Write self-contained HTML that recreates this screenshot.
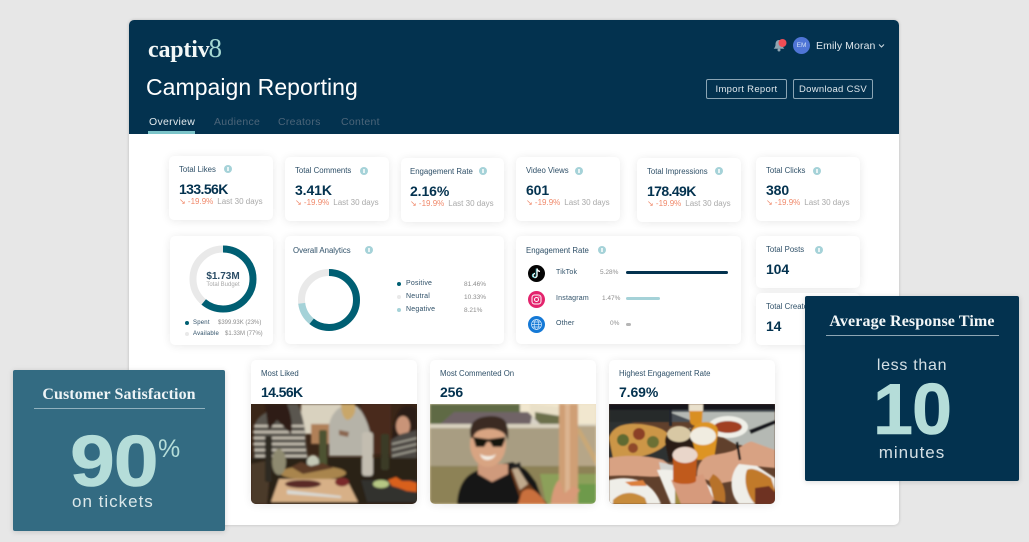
<!DOCTYPE html>
<html><head><meta charset="utf-8"><style>
*{box-sizing:border-box;margin:0;padding:0}
html,body{width:1029px;height:542px;overflow:hidden;background:#e7e7e7}
body{position:relative;font-family:"Liberation Sans",sans-serif;color:#03324f;filter:blur(.3px)}
.a{position:absolute;white-space:nowrap}
#panel{left:129px;top:20px;width:770px;height:505px;background:#fff;border-radius:5px;box-shadow:0 0 3px rgba(0,0,0,.18)}
#head{left:129px;top:20px;width:770px;height:114px;background:#03324f;border-radius:5px 5px 0 0}
.c{position:absolute;background:#fff;border-radius:5px;box-shadow:0 1px 9px rgba(0,0,0,.09)}
.t{position:absolute;font-size:7.8px;letter-spacing:0;color:#2f5068;white-space:nowrap}
.i{position:absolute;width:8px;height:8px;border-radius:50%;background:#a5d2d8}
.i:after{content:"";position:absolute;left:3.4px;top:2px;width:1.2px;height:4px;background:#e8f4f5}
.v{position:absolute;font-size:14px;font-weight:bold;color:#03324f;white-space:nowrap;letter-spacing:-.1px}
.d{position:absolute;font-size:8px;white-space:nowrap;color:#f08a6c}
.d span{color:#a9a9a9;margin-left:4px;letter-spacing:0}
.s{position:absolute;font-size:6.5px;color:#8d8d8d;white-space:nowrap}
.l{position:absolute;font-size:7px;color:#2f5068;white-space:nowrap;letter-spacing:.2px}
.p{position:absolute;width:5px;height:5px;border-radius:50%}
.tab{position:absolute;top:116px;font-size:10.5px;letter-spacing:.3px;color:#4c6579;white-space:nowrap}
.btn{position:absolute;top:79px;height:20px;border:1px solid #8ba5b4;border-radius:2px;color:#dfe7ec;font-size:9.5px;letter-spacing:.3px;text-align:center;line-height:19px}
.ser{font-family:"Liberation Serif",serif;font-weight:bold}
.big{-webkit-text-stroke:.6px #b5ddd9}
svg{position:absolute;display:block}
</style></head><body>
<div class="a" id="panel"></div>
<div class="a" id="head"></div>

<div class="a ser" style="left:148px;top:33px;font-size:24px;color:#f2f7f7;letter-spacing:-.2px">captiv<span style="color:#a5d8d2;font-weight:normal;font-size:27px;margin-left:-1px">8</span></div>
<div class="a" style="left:146px;top:74px;font-size:23px;color:#fff;letter-spacing:.05px">Campaign Reporting</div>
<div class="tab" style="left:149px;color:#e2e9ed">Overview</div>
<div class="tab" style="left:214px">Audience</div>
<div class="tab" style="left:278px">Creators</div>
<div class="tab" style="left:341px">Content</div>
<div class="a" style="left:148px;top:131px;width:47px;height:3px;background:#7cc4c9"></div>

<svg style="left:772px;top:38px" width="18" height="16" viewBox="0 0 18 16"><path d="M7 2c-2.400 0-3.500 2-3.500 4.500 0 2-.8 3-1.800 4.200h10.600c-1-1.200-1.800-2.200-1.800-4.200C10.500 4 9.400 2 7 2z" fill="#8fa5b2"/><circle cx="7" cy="12" r="1.500" fill="#8fa5b2"/><circle cx="10.500" cy="5" r="4" fill="#ee4d55"/></svg>
<div class="a" style="left:793px;top:37px;width:17px;height:17px;border-radius:50%;background:#4f75d6;color:#cfe0f5;font-size:6.500px;text-align:center;line-height:17px">EM</div>
<div class="a" style="left:816px;top:40px;font-size:10.500px;color:#dfe7ec;letter-spacing:.1px">Emily Moran</div>
<svg style="left:878px;top:43px" width="7" height="6" viewBox="0 0 7 6"><path d="M1 1.500l2.500 2.500L6 1.500" fill="none" stroke="#cfd9e0" stroke-width="1"/></svg>
<div class="btn" style="left:706px;width:81px">Import Report</div>
<div class="btn" style="left:793px;width:80px">Download CSV</div>

<!-- row 1 -->
<div class="c" style="left:169px;top:156px;width:104px;height:64px"></div>
<div class="t" style="left:179px;top:165px">Total Likes</div><div class="i" style="left:224px;top:165px"></div>
<div class="v" style="left:179px;top:181px;letter-spacing:-.6px">133.56K</div>
<div class="d" style="left:179px;top:197px">↘ -19.9%<span>Last 30 days</span></div>

<div class="c" style="left:285px;top:157px;width:104px;height:64px"></div>
<div class="t" style="left:295px;top:166px">Total Comments</div><div class="i" style="left:360px;top:167px"></div>
<div class="v" style="left:295px;top:182px">3.41K</div>
<div class="d" style="left:295px;top:198px">↘ -19.9%<span>Last 30 days</span></div>

<div class="c" style="left:401px;top:158px;width:103px;height:64px"></div>
<div class="t" style="left:410px;top:167px">Engagement Rate</div><div class="i" style="left:479px;top:167px"></div>
<div class="v" style="left:410px;top:183px">2.16%</div>
<div class="d" style="left:410px;top:199px">↘ -19.9%<span>Last 30 days</span></div>

<div class="c" style="left:516px;top:157px;width:104px;height:64px"></div>
<div class="t" style="left:526px;top:166px">Video Views</div><div class="i" style="left:575px;top:167px"></div>
<div class="v" style="left:526px;top:182px">601</div>
<div class="d" style="left:526px;top:198px">↘ -19.9%<span>Last 30 days</span></div>

<div class="c" style="left:637px;top:158px;width:104px;height:64px"></div>
<div class="t" style="left:647px;top:167px">Total Impressions</div><div class="i" style="left:715px;top:167px"></div>
<div class="v" style="left:647px;top:183px;letter-spacing:-.6px">178.49K</div>
<div class="d" style="left:647px;top:199px">↘ -19.9%<span>Last 30 days</span></div>

<div class="c" style="left:756px;top:157px;width:104px;height:64px"></div>
<div class="t" style="left:766px;top:166px">Total Clicks</div><div class="i" style="left:813px;top:167px"></div>
<div class="v" style="left:766px;top:182px">380</div>
<div class="d" style="left:766px;top:198px">↘ -19.9%<span>Last 30 days</span></div>

<!-- row 2 -->
<div class="c" style="left:170px;top:236px;width:103px;height:109px"></div>
<svg style="left:189px;top:245px" width="68" height="68" viewBox="0 0 68 68"><circle cx="34" cy="34" r="30" fill="none" stroke="#e9e9e9" stroke-width="7"/><circle cx="34" cy="34" r="30" fill="none" stroke="#005f73" stroke-width="7" stroke-dasharray="115 188.500" transform="rotate(-90 34 34)"/></svg>
<div class="a" style="left:189px;width:68px;top:271px;text-align:center;font-size:10px;font-weight:bold;color:#2b4d66">$1.73M</div>
<div class="a" style="left:189px;width:68px;top:282px;text-align:center;font-size:6px;color:#a9a9a9">Total Budget</div>
<div class="p" style="left:185px;top:321px;width:4px;height:4px;background:#005f73"></div>
<div class="l" style="left:193px;top:320px;font-size:6px">Spent</div>
<div class="s" style="left:218px;top:320px;font-size:6px">$399.93K (23%)</div>
<div class="p" style="left:185px;top:332px;width:4px;height:4px;background:#e9e9e9"></div>
<div class="l" style="left:193px;top:331px;font-size:6px">Available</div>
<div class="s" style="left:225px;top:331px;font-size:6px">$1.33M (77%)</div>

<div class="c" style="left:285px;top:236px;width:219px;height:108px"></div>
<div class="t" style="left:293px;top:246px">Overall Analytics</div><div class="i" style="left:365px;top:246px"></div>
<svg style="left:298px;top:269px" width="62" height="62" viewBox="0 0 62 62"><circle cx="31" cy="31" r="27.500" fill="none" stroke="#e9e9e9" stroke-width="7"/><circle cx="31" cy="31" r="27.500" fill="none" stroke="#a5d2d8" stroke-width="7" stroke-dasharray="0 104 22 200" transform="rotate(-90 31 31)"/><circle cx="31" cy="31" r="27.500" fill="none" stroke="#005f73" stroke-width="7" stroke-dasharray="105 172.800" transform="rotate(-90 31 31)"/></svg>
<div class="p" style="left:397px;top:282px;width:4px;height:4px;background:#005f73"></div>
<div class="l" style="left:406px;top:280px">Positive</div><div class="s" style="left:464px;top:281px">81.46%</div>
<div class="p" style="left:397px;top:295px;width:4px;height:4px;background:#e9e9e9"></div>
<div class="l" style="left:406px;top:293px">Neutral</div><div class="s" style="left:464px;top:294px">10.33%</div>
<div class="p" style="left:397px;top:308px;width:4px;height:4px;background:#a5d2d8"></div>
<div class="l" style="left:406px;top:306px">Negative</div><div class="s" style="left:464px;top:307px">8.21%</div>

<div class="c" style="left:516px;top:236px;width:225px;height:108px"></div>
<div class="t" style="left:526px;top:246px">Engagement Rate</div><div class="i" style="left:598px;top:246px"></div>
<svg style="left:528px;top:265px" width="17" height="17" viewBox="0 0 17 17"><circle cx="8.500" cy="8.500" r="8.500" fill="#050505"/><path d="M9 3.500v7a2 2 0 1 1-2-2M9 3.500c.3 1.700 1.400 2.700 3 2.900" fill="none" stroke="#fff" stroke-width="1.400"/><path d="M8 3.500v7a2 2 0 1 1-2-2" fill="none" stroke="#29d3d8" stroke-width=".5"/></svg>
<div class="l" style="left:556px;top:269px">TikTok</div><div class="s" style="left:600px;top:269px">5.28%</div>
<div class="a" style="left:626px;top:271px;width:102px;height:3px;border-radius:2px;background:#03324f"></div>
<svg style="left:528px;top:291px" width="17" height="17" viewBox="0 0 17 17"><circle cx="8.500" cy="8.500" r="8.500" fill="#e3246d"/><rect x="4" y="4" width="9" height="9" rx="2.500" fill="none" stroke="#fff" stroke-width="1"/><circle cx="8.500" cy="8.500" r="2" fill="none" stroke="#fff" stroke-width="1"/><circle cx="11" cy="6" r=".6" fill="#fff"/></svg>
<div class="l" style="left:556px;top:295px">Instagram</div><div class="s" style="left:602px;top:295px">1.47%</div>
<div class="a" style="left:626px;top:297px;width:34px;height:3px;border-radius:2px;background:#a5d2d8"></div>
<svg style="left:528px;top:316px" width="17" height="17" viewBox="0 0 17 17"><circle cx="8.500" cy="8.500" r="8.500" fill="#1579d6"/><g fill="none" stroke="#cfe6fb" stroke-width=".7"><circle cx="8.500" cy="8.500" r="5"/><ellipse cx="8.500" cy="8.500" rx="2.300" ry="5"/><path d="M3.500 8.500h10M4.200 6h8.600M4.200 11h8.600"/></g></svg>
<div class="l" style="left:556px;top:320px">Other</div><div class="s" style="left:610px;top:320px">0%</div>
<div class="a" style="left:626px;top:323px;width:5px;height:3px;border-radius:2px;background:#b5b5b5"></div>

<div class="c" style="left:756px;top:236px;width:104px;height:52px"></div>
<div class="t" style="left:766px;top:245px">Total Posts</div><div class="i" style="left:815px;top:246px"></div>
<div class="v" style="left:766px;top:261px">104</div>
<div class="c" style="left:756px;top:293px;width:104px;height:52px"></div>
<div class="t" style="left:766px;top:302px">Total Creators</div>
<div class="v" style="left:766px;top:318px">14</div>

<!-- row 3 -->
<div class="c" style="left:251px;top:360px;width:166px;height:144px"></div>
<div class="t" style="left:261px;top:369px">Most Liked</div>
<div class="v" style="left:261px;top:384px;letter-spacing:-.6px">14.56K</div>
<svg style="left:251px;top:404px;border-radius:0 0 5px 5px" width="166" height="100" viewBox="0 0 166 100">
<defs><filter id="b1"><feGaussianBlur stdDeviation="1"/></filter></defs>
<rect width="166" height="100" fill="#3a2618"/>
<g filter="url(#b1)">
<rect x="50" y="0" width="42" height="30" fill="#d9d2bf"/>
<rect x="110" y="0" width="30" height="50" fill="#4a2c1c"/>
<rect x="60" y="20" width="22" height="20" fill="#b08058"/>
<path d="M3 55V22C8 8 18 10 25 0h22c5 12 8 28 8 38l2 16z" fill="#5a5650"/>
<path d="M3 22h50M2 28h52M2 34h52M2 40h52M3 46h52M4 52h52" stroke="#cfc8ba" stroke-width="2"/>
<path d="M14 0c2 12 2 20 4 26l8-10 14 14c2-10 0-20-4-30z" fill="#2f1d14"/>
<path d="M78 52V22c1-10 8-18 14-20h14c6 6 12 18 14 32l-2 18z" fill="#b6b3a8"/>
<path d="M90 0c0 8 2 14 6 16 4 0 10-6 8-16z" fill="#c9a76a"/>
<path d="M88 26l10 2-1 5-9-2z" fill="#8a6650"/>
<path d="M142 48c-2-14 0-34 8-44 6-4 14-2 16 2v42z" fill="#2c1a14"/>
<ellipse cx="152" cy="22" rx="7" ry="10" fill="#c99478"/>
<path d="M140 56V36l10-6 16-4v30z" fill="#4d4a44"/>
<path d="M141 40l25-6M141 46l25-6M141 52l25-6" stroke="#a8a598" stroke-width="1.500"/>
<rect x="0" y="54" width="166" height="46" fill="#2a2018"/>
<path d="M0 100V60l20-4-4 44z" fill="#4c3a2a"/>
<ellipse cx="62" cy="69" rx="33" ry="7" fill="#a9854d"/>
<rect x="14" y="32" width="7" height="46" rx="2" fill="#2d2a22"/>
<rect x="68" y="26" width="8" height="36" rx="2" fill="#4d5230"/>
<rect x="111" y="28" width="11" height="44" rx="3" fill="#c3bdb0"/>
<rect x="130" y="30" width="8" height="36" rx="2" fill="#3a3a28"/>
<ellipse cx="28" cy="58" rx="7" ry="13" fill="#8e8a70"/>
<ellipse cx="62" cy="58" rx="6" ry="7" fill="#c4c8b6"/>
<path d="M40 63l10-5 10 4 12-3 10 5-30 6z" fill="#5b3a26"/>
<path d="M28 75l60 0 8 1 11 22H20z" fill="#d7b087"/>
<ellipse cx="52" cy="80" rx="18" ry="4" fill="#5a2a28"/>
<ellipse cx="91" cy="78" rx="7" ry="4.500" fill="#7a2a2a"/>
<path d="M36 86l54 6v2l-54-4z" fill="#d9d9d4"/>
<path d="M110 76h56v22h-50z" fill="#33312d"/>
<ellipse cx="130" cy="80" rx="8" ry="4" fill="#b6c884"/>
<path d="M137 76l8-3 6 4 8 0 7 2v9l-10-1-8-3-7-2z" fill="#d9601f"/>
</g></svg>

<div class="c" style="left:430px;top:360px;width:166px;height:144px"></div>
<div class="t" style="left:440px;top:369px">Most Commented On</div>
<div class="v" style="left:440px;top:384px">256</div>
<svg style="left:430px;top:404px;border-radius:0 0 5px 5px" width="166" height="100" viewBox="0 0 166 100">
<defs><filter id="b2"><feGaussianBlur stdDeviation="1"/></filter></defs>
<rect width="166" height="100" fill="#ecdcc0"/>
<g filter="url(#b2)">
<rect width="166" height="22" fill="#f1e7cf"/>
<path d="M0 0h90v10l-40 10H0z" fill="#5f6a44"/>
<path d="M100 0l40 4v18h-40z" fill="#e9e0c8"/>
<path d="M105 8l25 4v12h-25z" fill="#6c6f4c"/>
<path d="M8 22l16-14h74l14 14z" fill="#6f6466"/>
<path d="M102 12l10 10h-12z" fill="#d8d2c6"/>
<rect x="0" y="20" width="166" height="4" fill="#d9d2bf"/>
<rect x="0" y="24" width="166" height="39" fill="#a89d82"/>
<rect x="148" y="22" width="18" height="40" fill="#b6a688"/>
<path d="M150 24l16 28v10l-20-36z" fill="#c9a877"/>
<rect x="0" y="62" width="166" height="38" fill="#8d8257"/>
<path d="M110 70h56v30h-50z" fill="#8ca05a"/>
<path d="M140 80h26v20h-26z" fill="#6e9a4c"/>
<rect x="129" y="0" width="19" height="100" fill="#cf9f75"/>
<rect x="135" y="0" width="5" height="100" fill="#dcb490"/>
<path d="M121 100c0-6 3-20 8-24 3 6 3 8 5 14l9-8 7 4-10 14z" fill="#d89a78"/>
<path d="M27 100c1-18 8-30 22-34l12-4 22-4 6 4c8 2 12 10 17 16l8 22z" fill="#141414"/>
<path d="M80 62l10-4 2 8-8 4z" fill="#222"/>
<path d="M48 60h30v10l-16 8-14-8z" fill="#cf9a7b"/>
<ellipse cx="58" cy="40" rx="18" ry="23" fill="#d8a482"/>
<path d="M41 34c-3-12 2-19 12-21 10-2 22-1 24 8 2 6 1 12 1 15l-2-4c-3-6-14-8-20-7s-11 2-13 9z" fill="#3b2a21"/>
<path d="M43 33l14 2 3 0 15-2 0 3-3 7-9 0-3-5-3 0-3 5-8 0z" fill="#15130f"/>
<path d="M50 50c5 3 12 3 16 0-2 5-6 6-9 6s-6-2-7-6z" fill="#f4eee4"/>
<path d="M80 66l5-2 23 26 10 10H92z" fill="#6a3a1e"/>
<path d="M82 65l6-1 10 16-8 6z" fill="#bfa98c"/>
<path d="M92 88c6-6 14-2 20 6l4 6H88z" fill="#c96f3c"/>
</g></svg>

<div class="c" style="left:609px;top:360px;width:166px;height:144px"></div>
<div class="t" style="left:619px;top:369px">Highest Engagement Rate</div>
<div class="v" style="left:619px;top:384px">7.69%</div>
<svg style="left:609px;top:404px;border-radius:0 0 5px 5px" width="166" height="100" viewBox="0 0 166 100">
<defs><filter id="b3"><feGaussianBlur stdDeviation=".9"/></filter></defs>
<rect width="166" height="100" fill="#60402c"/>
<g filter="url(#b3)">
<rect width="166" height="18" fill="#4a4f55"/>
<path d="M60 8h106v40l-40-8-40-22z" fill="#b5b9b4"/>
<rect width="166" height="6" fill="#16181a"/>
<path d="M0 6h60v12l-60 0z" fill="#26292c"/>
<rect x="60" y="6" width="3" height="16" fill="#22282e"/>
<path d="M140 26l26-10v4l-24 10z" fill="#14161a"/>
<path d="M0 18h22l30 10 10 30-62 12z" fill="#2f3032"/>
<path d="M0 34c4-14 20-15 32-14 16 2 28 6 28 14 0 10-24 20-40 20H4z" fill="#cc9646"/>
<circle cx="14" cy="36" r="6" fill="#5e6a32"/><circle cx="30" cy="30" r="6" fill="#8b3f25"/><circle cx="44" cy="38" r="6" fill="#6c7036"/><circle cx="24" cy="44" r="5" fill="#8f4a2a"/>
<rect x="80" y="24" width="2" height="12" fill="#bba"/>
<path d="M80 2h14l-1 16c-1 5-11 5-12 0z" fill="#d98f24"/>
<rect x="80" y="0" width="14" height="7" fill="#e9e0cc"/>
<ellipse cx="119" cy="23" rx="20" ry="11" fill="#efefe8"/>
<ellipse cx="119" cy="23" rx="14" ry="6" fill="#a13f20"/>
<path d="M0 54c20-4 40-2 54 2l8 6-2 8c-14 6-30 0-60 2z" fill="#d8a283"/>
<path d="M56 38c0-10 8-14 18-14 12 0 18 6 16 14l-4 20H60z" fill="#2a1c16"/>
<ellipse cx="70" cy="30" rx="12" ry="8" fill="#d8c8a4"/>
<path d="M82 30c0-8 8-12 14-12 8 0 14 4 13 12l-4 26H88z" fill="#dd9420"/>
<ellipse cx="94" cy="32" rx="13" ry="9" fill="#f0ece0"/>
<path d="M88 72c0-8 2-14 8-18 6-4 20-4 30-8 8-4 14-10 18-8l22 8v18l-22-2-14 14-22 4z" fill="#d8a283"/>
<path d="M128 38l3 18" stroke="#1b1b1b" stroke-width="2.500"/>
<path d="M130 60l18 2 18 12v26h-36c-10-10-10-30 0-40z" fill="#efeee8"/>
<path d="M138 66c6-4 18 4 24 8l4 12v14h-20c-8-8-12-24-8-34z" fill="#c17a2c"/>
<path d="M146 84l14-2 6 6v12h-20z" fill="#6e3320"/>
<path d="M0 76c24-6 44 2 52 24H0z" fill="#efeee8"/>
<path d="M4 96c8-8 20-10 32-2l2 6H4z" fill="#c78b3a"/>
<path d="M16 78l18-2 4 6-16 0z" fill="#db7f3a"/>
<path d="M50 58l28 6 6 4H52z" fill="#d3d3cf"/>
<path d="M48 66c16-2 56 4 62 34H62z" fill="#f0efe9"/>
<path d="M66 76c6-6 14-8 16 0l2 24H66z" fill="#a18c3f"/>
<path d="M104 70c8 4 14 14 12 30h-10l-6-24z" fill="#b7722a"/>
<path d="M62 76l14 0 18-6 8 20 6 10H72z" fill="#d69a7c"/>
<path d="M104 96l18 4h-20z" fill="#3a2a2a"/>
<g transform="translate(2 5)"><path d="M62 48c0-8 6-10 13-10 7 0 12 3 11 10l-1 24c-2 4-20 4-23 0z" fill="#c05a1e"/>
<ellipse cx="74" cy="46" rx="12.500" ry="8" fill="#e9d6ca"/></g>
</g></svg>

<!-- callouts -->
<div class="a" style="left:13px;top:370px;width:212px;height:161px;background:#336b82;border-radius:2px;box-shadow:0 1px 6px rgba(0,0,0,.15)"></div>
<div class="a ser" style="left:13px;width:212px;top:386px;text-align:center;font-size:16px;color:#eef4f6;letter-spacing:.1px">Customer Satisfaction</div>
<div class="a" style="left:34px;top:408px;width:171px;height:1px;background:#91b1be"></div>
<div class="a big" style="left:70px;top:420px;font-size:72px;font-weight:bold;color:#b5ddd9;line-height:84px;letter-spacing:-1px;transform:scaleX(1.12);transform-origin:left">90</div>
<div class="a" style="left:158px;top:434px;font-size:25px;color:#b5ddd9;line-height:30px">%</div>
<div class="a" style="left:72px;top:492px;font-size:17px;color:#dce8ea;letter-spacing:1px">on tickets</div>

<div class="a" style="left:805px;top:296px;width:214px;height:185px;background:#03324f;border-radius:2px;box-shadow:0 1px 6px rgba(0,0,0,.15)"></div>
<div class="a ser" style="left:805px;width:214px;top:313px;text-align:center;font-size:16px;color:#f2f6f7;letter-spacing:.12px">Average Response Time</div>
<div class="a" style="left:826px;top:335px;width:173px;height:1px;background:#8ea6b4"></div>
<div class="a" style="left:805px;width:214px;top:357px;text-align:center;font-size:16px;color:#d5e0e5;letter-spacing:.7px">less than</div>
<div class="a big" style="left:805px;width:214px;top:368px;text-align:center;font-size:72px;font-weight:bold;color:#b5ddd9;letter-spacing:-1px;line-height:84px">10</div>
<div class="a" style="left:805px;width:214px;top:443px;text-align:center;font-size:17px;color:#d5e0e5;letter-spacing:1px">minutes</div>
</body></html>
